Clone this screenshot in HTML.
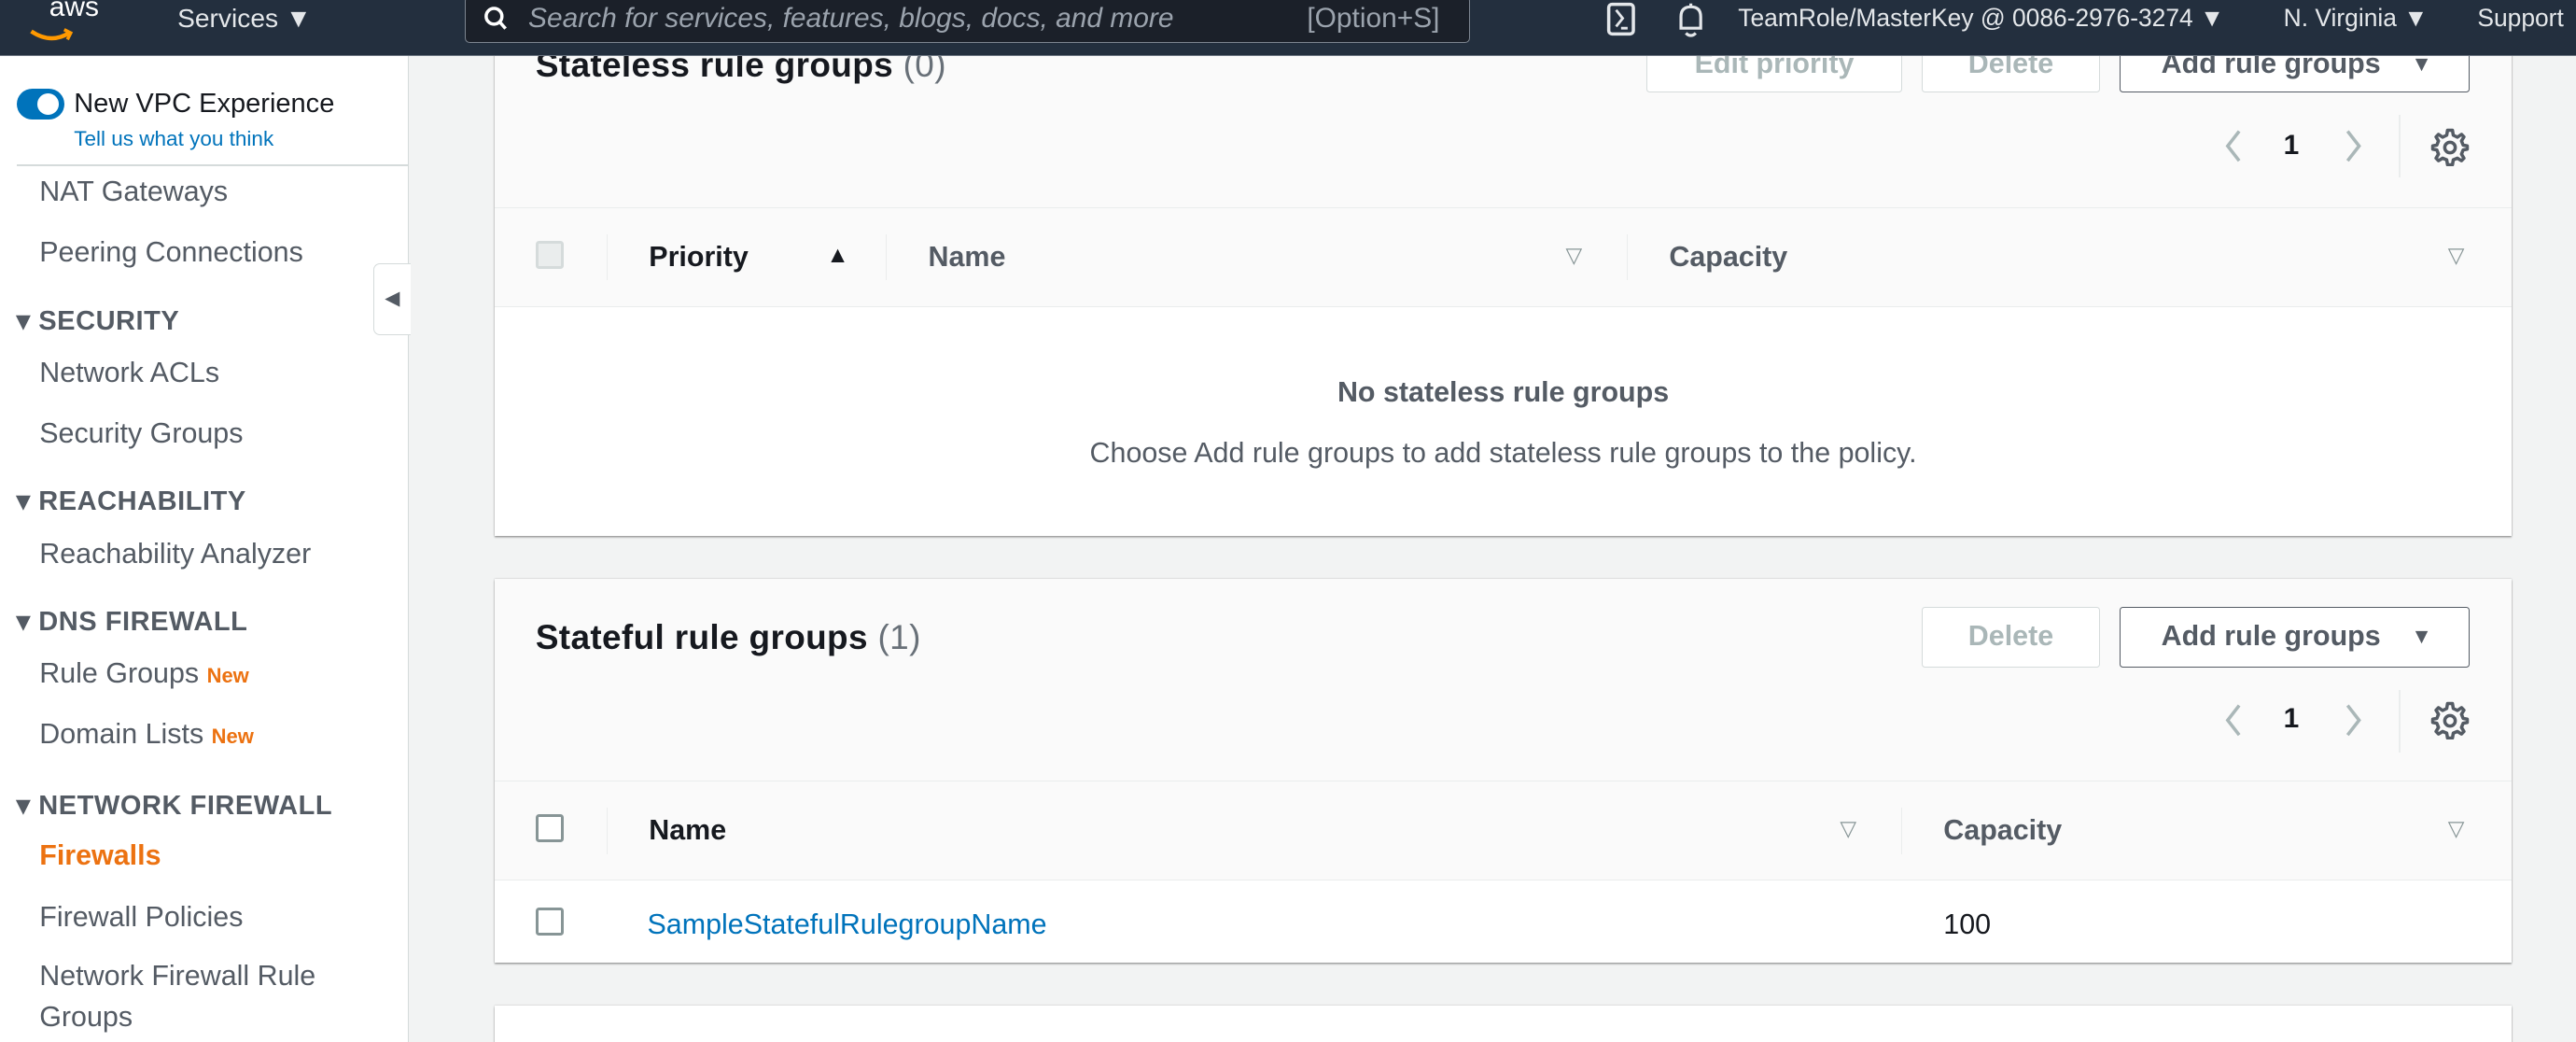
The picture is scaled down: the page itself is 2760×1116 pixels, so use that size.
<!DOCTYPE html>
<html><head><meta charset="utf-8"><style>
*{box-sizing:border-box;margin:0;padding:0}
html,body{width:2760px;height:1116px;overflow:hidden;background:#f2f3f3}
#w{zoom:1.7602;width:1568px;height:634px;position:relative;font-family:"Liberation Sans",sans-serif;color:#16191f}
.top{position:absolute;z-index:10;left:0;top:0;width:1568px;height:34px;background:#232f3e;border-bottom:1px solid #6b7480;color:#e4e7ea;font-size:16px}
.top span{position:absolute;top:2px;white-space:nowrap}
.search{position:absolute;left:283px;top:-2px;width:612px;height:28px;background:#1b2029;border:1px solid #7d8590;border-radius:3px}
.side{position:absolute;left:0;top:34px;width:249px;height:600px;background:#fff;border-right:1px solid #d5dbdb}
.side .it{position:absolute;left:24px;font-size:17.3px;color:#545b64;white-space:nowrap}
.side .h{position:absolute;left:10px;font-size:16.5px;font-weight:bold;color:#545b64;letter-spacing:.3px}
.new{color:#ec7211;font-size:12.5px;font-weight:bold}
.card{position:absolute;left:301px;width:1228px;background:#fff;box-shadow:0 1px 1px rgba(0,0,0,.3),0 0 1px rgba(0,0,0,.25)}
.hd{position:absolute;left:0;width:100%;background:#fafafa}
.btn{position:absolute;height:34px;border:1px solid #d5dbdb;border-radius:2px;background:#fff;color:#aab7b8;font-weight:bold;font-size:17.3px;text-align:center;line-height:32px}
.btn.p{border-color:#545b64;color:#545b64;text-align:left;padding-left:25px}
.th{position:absolute;left:0;width:100%;height:61px;background:#fafafa;border-top:1px solid #eaeded;border-bottom:1px solid #eaeded}
.th b{position:absolute;top:20px;font-size:17.3px;color:#545b64}
.sep{position:absolute;top:16px;width:1px;height:28px;background:#eaeded}
.cb{position:absolute;width:17px;height:17px;border:2px solid #879596;border-radius:2px;background:#fff}
.tri{position:absolute;font-size:13px;color:#879596}
.pg{position:absolute;font-size:17px}
</style></head><body><div id="w">
<div class="top">
 <span style="left:30px;top:-5px;font-size:17px;color:#fff">aws</span>
 <svg style="position:absolute;left:17px;top:17px" width="28" height="10"><path d="M2 2 Q14 10 25 3" stroke="#f90" stroke-width="2.5" fill="none"/><path d="M22 1 L26 3 L24 7" stroke="#f90" stroke-width="2" fill="none"/></svg>
 <span style="left:108px">Services ▼</span>
 <div class="search">
  <svg style="position:absolute;left:10px;top:5px" width="16" height="16"><circle cx="7" cy="6.5" r="4.8" stroke="#fff" stroke-width="2" fill="none"/><path d="M10.5 10 L14 14" stroke="#fff" stroke-width="2"/></svg>
  <span style="left:38px;top:3px;font-style:italic;color:#9ba3ad;font-size:17px">Search for services, features, blogs, docs, and more</span>
  <span style="left:512px;top:3px;color:#9ba3ad;font-size:17px">[Option+S]</span>
 </div>
 <svg style="position:absolute;left:978px;top:1px" width="20" height="22"><rect x="1.5" y="1.5" width="15" height="18" rx="2" stroke="#e4e7ea" stroke-width="2" fill="none"/><path d="M6 5 L10 10 L6 15 M9 16 H13" stroke="#e4e7ea" stroke-width="1.6" fill="none"/></svg>
 <svg style="position:absolute;left:1019px;top:1px" width="20" height="22"><path d="M4 16 V9 Q4 3 10 3 Q16 3 16 9 V16 Z M10 1 V3 M7 19 Q10 22 13 19" stroke="#e4e7ea" stroke-width="1.8" fill="none"/></svg>
 <span style="left:1058px;font-size:15px">TeamRole/MasterKey @ 0086-2976-3274 ▼</span>
 <span style="left:1390px;font-size:15px">N. Virginia ▼</span>
 <span style="left:1508px;font-size:15px">Support</span>
</div>
<div class="side">
 <div style="position:absolute;left:10px;top:20px;width:29px;height:19px;border-radius:10px;background:#0073bb"><div style="position:absolute;right:3px;top:3px;width:13px;height:13px;border-radius:50%;background:#fff"></div></div>
 <div style="position:absolute;left:45px;top:20px;font-size:16.5px">New VPC Experience</div>
 <div style="position:absolute;left:45px;top:43px;font-size:12.8px;color:#0073bb">Tell us what you think</div>
 <div style="position:absolute;left:10px;top:66px;width:239px;height:1px;background:#d5dbdb"></div>
 <div class="it" style="top:73px">NAT Gateways</div>
 <div class="it" style="top:110px">Peering Connections</div>
 <div class="h" style="top:151px">▾ SECURITY</div>
 <div class="it" style="top:183px">Network ACLs</div>
 <div class="it" style="top:220px">Security Groups</div>
 <div class="h" style="top:261px">▾ REACHABILITY</div>
 <div class="it" style="top:293px">Reachability Analyzer</div>
 <div class="h" style="top:334px">▾ DNS FIREWALL</div>
 <div class="it" style="top:366px">Rule Groups <span class="new">New</span></div>
 <div class="it" style="top:403px">Domain Lists <span class="new">New</span></div>
 <div class="h" style="top:446px">▾ NETWORK FIREWALL</div>
 <div class="it" style="top:477px;color:#ec7211;font-weight:bold">Firewalls</div>
 <div class="it" style="top:514px">Firewall Policies</div>
 <div class="it" style="top:550px">Network Firewall Rule</div>
 <div class="it" style="top:575px">Groups</div>
</div>
<div style="position:absolute;left:227px;top:160px;width:23px;height:44px;background:#fff;border:1px solid #d5dbdb;border-right:none;border-radius:4px 0 0 4px;color:#545b64;font-size:12px;line-height:42px;text-align:center">◀</div>

<div class="card" style="top:-10px;height:336px">
 <div class="hd" style="top:0;height:137px"></div>
 <div style="position:absolute;left:25px;top:38px;font-size:21px;font-weight:bold;letter-spacing:.2px">Stateless rule groups <span style="color:#687078;font-weight:normal">(0)</span></div>
 <div class="btn" style="left:701px;top:32px;width:156px">Edit priority</div>
 <div class="btn" style="left:869px;top:32px;width:108px">Delete</div>
 <div class="btn p" style="left:989px;top:32px;width:213px">Add rule groups <span style="position:absolute;right:22px;font-size:13px">▼</span></div>
 <svg style="position:absolute;left:1050px;top:88px" width="90" height="22"><path d="M12 2 L5 11 L12 20" stroke="#aab7b8" stroke-width="2" fill="none"/><path d="M78 2 L85 11 L78 20" stroke="#aab7b8" stroke-width="2" fill="none"/></svg>
 <div class="pg" style="left:1089px;top:89px;font-weight:bold">1</div>
 <div style="position:absolute;left:1159px;top:80px;width:1px;height:38px;background:#eaeded"></div>
 <svg style="position:absolute;left:1178px;top:87px" width="24" height="24" viewBox="0 0 24 24"><path d="M12 2 L14 2 L14.5 5 L17 6.2 L19.5 4.5 L21 6 L19.5 8.5 L20.5 11 L23 11.5 L23 13.5 L20.5 14 L19.5 16.5 L21 19 L19.5 20.5 L17 19 L14.5 20 L14 23 L11 23 L10.5 20 L8 19 L5.5 20.5 L4 19 L5.5 16.5 L4.5 14 L2 13.5 L2 11.5 L4.5 11 L5.5 8.5 L4 6 L5.5 4.5 L8 6.2 L10.5 5 L11 2 Z" stroke="#545b64" stroke-width="2" fill="none" stroke-linejoin="round"/><circle cx="12.5" cy="12.5" r="3.2" stroke="#545b64" stroke-width="2" fill="none"/></svg>
 <div class="th" style="top:136px">
  <div class="cb" style="left:25px;top:20px;background:#eaeded;border-color:#d5dbdb"></div>
  <div class="sep" style="left:68px"></div><b style="left:94px;color:#16191f">Priority</b><span class="tri" style="left:202px;top:21px;color:#16191f;font-size:14px">▲</span>
  <div class="sep" style="left:238px"></div><b style="left:264px">Name</b><span class="tri" style="left:652px;top:21px">▽</span>
  <div class="sep" style="left:689px"></div><b style="left:715px">Capacity</b><span class="tri" style="left:1189px;top:21px">▽</span>
 </div>
 <div style="position:absolute;left:0;width:100%;top:239px;text-align:center;font-size:17.3px;font-weight:bold;color:#545b64">No stateless rule groups</div>
 <div style="position:absolute;left:0;width:100%;top:276px;text-align:center;font-size:17.3px;color:#545b64">Choose Add rule groups to add stateless rule groups to the policy.</div>
</div>

<div class="card" style="top:352px;height:234px">
 <div class="hd" style="top:0;height:123px"></div>
 <div style="position:absolute;left:25px;top:24px;font-size:21px;font-weight:bold;letter-spacing:.2px">Stateful rule groups <span style="color:#687078;font-weight:normal">(1)</span></div>
 <div class="btn" style="left:869px;top:17px;width:108px;height:37px;line-height:35px">Delete</div>
 <div class="btn p" style="left:989px;top:17px;width:213px;height:37px;line-height:35px">Add rule groups <span style="position:absolute;right:22px;font-size:13px">▼</span></div>
 <svg style="position:absolute;left:1050px;top:75px" width="90" height="22"><path d="M12 2 L5 11 L12 20" stroke="#aab7b8" stroke-width="2" fill="none"/><path d="M78 2 L85 11 L78 20" stroke="#aab7b8" stroke-width="2" fill="none"/></svg>
 <div class="pg" style="left:1089px;top:76px;font-weight:bold">1</div>
 <div style="position:absolute;left:1159px;top:68px;width:1px;height:38px;background:#eaeded"></div>
 <svg style="position:absolute;left:1178px;top:74px" width="24" height="24" viewBox="0 0 24 24"><path d="M12 2 L14 2 L14.5 5 L17 6.2 L19.5 4.5 L21 6 L19.5 8.5 L20.5 11 L23 11.5 L23 13.5 L20.5 14 L19.5 16.5 L21 19 L19.5 20.5 L17 19 L14.5 20 L14 23 L11 23 L10.5 20 L8 19 L5.5 20.5 L4 19 L5.5 16.5 L4.5 14 L2 13.5 L2 11.5 L4.5 11 L5.5 8.5 L4 6 L5.5 4.5 L8 6.2 L10.5 5 L11 2 Z" stroke="#545b64" stroke-width="2" fill="none" stroke-linejoin="round"/><circle cx="12.5" cy="12.5" r="3.2" stroke="#545b64" stroke-width="2" fill="none"/></svg>
 <div class="th" style="top:123px">
  <div class="cb" style="left:25px;top:20px"></div>
  <div class="sep" style="left:68px"></div><b style="left:94px;color:#16191f">Name</b><span class="tri" style="left:819px;top:21px">▽</span>
  <div class="sep" style="left:856px"></div><b style="left:882px">Capacity</b><span class="tri" style="left:1189px;top:21px">▽</span>
 </div>
 <div class="cb" style="left:25px;top:200px"></div>
 <div style="position:absolute;left:93px;top:201px;font-size:17.3px;color:#0073bb">SampleStatefulRulegroupName</div>
 <div style="position:absolute;left:882px;top:201px;font-size:17.3px">100</div>
</div>

<div class="card" style="top:612px;height:40px"></div>
</div></body></html>
